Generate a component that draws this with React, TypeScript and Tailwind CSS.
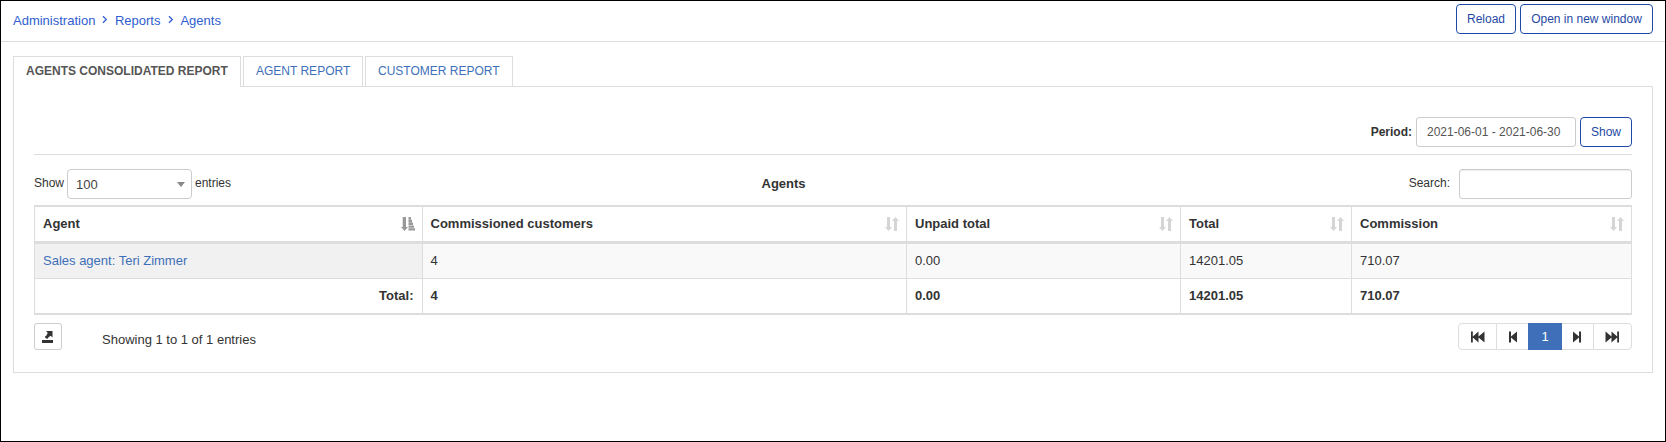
import React from "react";

const columns = [
  { label: "Agent", value: "Sales agent: Teri Zimmer", total: "Total:" },
  { label: "Commissioned customers", value: "4", total: "4" },
  { label: "Unpaid total", value: "0.00", total: "0.00" },
  { label: "Total", value: "14201.05", total: "14201.05" },
  { label: "Commission", value: "710.07", total: "710.07" },
];

const cellStart = ["pl-2", "pl-[7.5px]", "pl-2", "pl-2", "pl-2"];

function Chevron() {
  return (
    <svg className="h-[9px] w-[6px] shrink-0" viewBox="0 0 6 9" fill="none" stroke="#2f5ed0" strokeWidth="1.3">
      <path d="M1 1.200l3.300 3.300L1 7.800" />
    </svg>
  );
}

function SortBoth() {
  return (
    <svg className="h-[14px] w-[14px] shrink-0" viewBox="0 0 14 14" fill="#d5d5d5">
      <path d="M2 0h3v10h2l-3.500 4L0 10h2zM9 14h3V4h2l-3.500-4L7 4h2z" />
    </svg>
  );
}

function SortAsc() {
  return (
    <svg className="h-[14px] w-[14px] shrink-0" viewBox="0 0 14 14" fill="#999">
      <path d="M1.700 0h3.300v10h2l-3.500 4L0 10h1.700zM7.500 0h2.500v2.400H7.500zM7.500 2.800h3.500v2.400H7.500zM7.500 5.600h4.500v2.400H7.500zM7.500 8.400h5.500v2.400H7.500zM7.500 11.200h6.500v2.200H7.500z" />
    </svg>
  );
}

function Step({ double = false, flip = false }: { double?: boolean; flip?: boolean }) {
  return (
    <svg
      className={(double ? "w-[14px]" : "w-[8px]") + (flip ? " mr-px -scale-x-100" : "") + " h-[12px]"}
      viewBox={double ? "0 0 14 12" : "0 0 8 12"}
      fill="#333"
    >
      <path d={double ? "M0 .5h1.800v5L7.500 .5v5L13.500 .5v11L7.500 6.500v5L1.800 6.500v5H0z" : "M0 .5h2v5L8 .5v11L2 6.500v5H0z"} />
    </svg>
  );
}

export default function App() {
  return (
    <div className="h-[442px] w-[1666px] border border-black bg-white font-['Liberation_Sans',Arial,sans-serif] text-[13px] leading-[18px] text-[#333]">
      <header className="flex h-[41px] items-start justify-between border-b border-[#ddd] pr-3 pl-3">
        <nav className="flex items-start pt-[11px] text-[#2f5ed0]">
          <a>Administration</a>
          <span className="flex w-[19.500px] pt-[3px] pl-[7px]"><Chevron /></span>
          <a>Reports</a>
          <span className="flex w-5 pt-[3px] pl-[7.500px]"><Chevron /></span>
          <a>Agents</a>
        </nav>
        <div className="flex gap-1 pt-[3px] text-xs text-[#1f49a5]">
          <button className="h-[30px] w-[60px] rounded border border-[#1f49a5] pb-px">Reload</button>
          <button className="h-[30px] w-[133px] rounded border border-[#1f49a5] pb-px">Open in new window</button>
        </div>
      </header>

      <main className="px-3 pt-[14px]">
        <div className="relative z-10 -mb-px flex h-[31px] gap-[2px] text-xs text-[#3e6fb8]">
          <div className="h-[31px] w-[228px] whitespace-nowrap border border-b-0 border-[#ddd] bg-white pt-[6px] pl-3 leading-[17px] font-bold text-[#555]">
            AGENTS CONSOLIDATED REPORT
          </div>
          <div className="h-[30px] w-[120px] whitespace-nowrap border border-b-0 border-[#ddd] pt-[6px] pl-3 leading-[17px]">AGENT REPORT</div>
          <div className="h-[30px] w-[148px] whitespace-nowrap border border-b-0 border-[#ddd] pt-[6px] pl-3 leading-[17px]">CUSTOMER REPORT</div>
        </div>

        <section className="h-[287px] border border-[#ddd] px-5 pt-[30px]">
          <div className="flex h-[38px] items-start justify-end border-b border-[#ddd] text-xs">
            <b className="mr-[4px] leading-[30px]">Period:</b>
            <div className="mr-1 h-[30px] w-[160px] rounded-[3px] border border-[#ccc] pl-[10px] leading-7 text-[#555]">2021-06-01 - 2021-06-30</div>
            <button className="h-[30px] w-[52px] rounded border border-[#1f49a5] text-[#1f49a5]">Show</button>
          </div>

          <div className="mt-[14px] flex h-[30px] text-xs">
            <div className="flex w-[727.500px] leading-[28px]">
              <span className="w-[33px]">Show</span>
              <div className="mr-[3px] flex h-[30px] w-[125px] items-center justify-between rounded border border-[#ccc] pr-[6px] pl-2 text-[13px] text-[#444]">
                <span className="pt-[2px]">100</span>
                <svg className="h-[5px] w-[8px]" viewBox="0 0 8 5" fill="#888"><path d="M0 0h8L4 5z" /></svg>
              </div>
              <span>entries</span>
            </div>
            <b className="text-[13px] leading-[29px]">Agents</b>
            <div className="ml-auto flex">
              <span className="mr-[9px] leading-[29px]">Search:</span>
              <input className="h-[30px] w-[173px] rounded-[3px] border border-[#ccc] shadow-[inset_0_1px_1px_rgba(0,0,0,0.075)]" />
            </div>
          </div>

          <table className="mt-[6px] w-[1598px] table-fixed border-separate border-spacing-0 border-l border-[#ddd] text-left">
            <colgroup>
              <col className="w-[388px]" />
              <col className="w-[484px]" />
              <col className="w-[274px]" />
              <col className="w-[171px]" />
              <col className="w-[280px]" />
            </colgroup>
            <thead>
              <tr>
                {columns.map((c, i) => (
                  <th key={c.label} className={"h-[39px] border-t-2 border-r border-b-3 border-[#ddd] py-0 pr-[7px] " + cellStart[i]}>
                    <div className="flex items-center justify-between">
                      {c.label}
                      {i === 0 ? <SortAsc /> : <SortBoth />}
                    </div>
                  </th>
                ))}
              </tr>
            </thead>
            <tbody>
              <tr>
                {columns.map((c, i) => (
                  <td
                    key={c.label}
                    className={
                      "h-[35px] border-r border-b border-[#ddd] py-0 pr-2 " +
                      cellStart[i] +
                      (i === 0 ? " bg-[#f1f1f1] text-[#3e6fb8]" : " bg-[#f9f9f9]")
                    }
                  >
                    {c.value}
                  </td>
                ))}
              </tr>
            </tbody>
            <tfoot>
              <tr>
                {columns.map((c, i) => (
                  <th key={c.label} className={"h-[36px] border-r border-b-2 border-[#ddd] py-0 " + cellStart[i] + (i === 0 ? " pr-[8.5px] text-right" : " pr-2")}>
                    {c.total}
                  </th>
                ))}
              </tr>
            </tfoot>
          </table>

          <div className="mt-2 flex h-[27px]">
            <button className="flex h-[27px] w-[28px] items-center justify-center rounded-[3px] border border-[#ccc]">
              <svg className="h-[12px] w-[12px]" viewBox="0 0 12 12" fill="#333">
                <path d="M0 9h11v3H0zM4 0h6.500v6.500L8.700 4.800C7 6 6 6.500 5.500 8 4.500 7.500 3 7 2.800 5.500 4 5.500 5 4.200 5.700 1.800z" />
              </svg>
            </button>
            <span className="ml-10 pt-2">Showing 1 to 1 of 1 entries</span>
            <div className="ml-auto flex h-[27px]">
              <span className="flex w-[39px] items-center justify-center rounded-l border border-[#ddd]"><Step double /></span>
              <span className="flex w-[31px] items-center justify-center border-y border-[#ddd]"><Step /></span>
              <span className="flex w-[34px] items-center justify-center bg-[#3e6fb8] text-white">1</span>
              <span className="flex w-[31px] items-center justify-center border-y border-[#ddd]"><Step flip /></span>
              <span className="flex w-[39px] items-center justify-center rounded-r border border-[#ddd]"><Step double flip /></span>
            </div>
          </div>
        </section>
      </main>
    </div>
  );
}
